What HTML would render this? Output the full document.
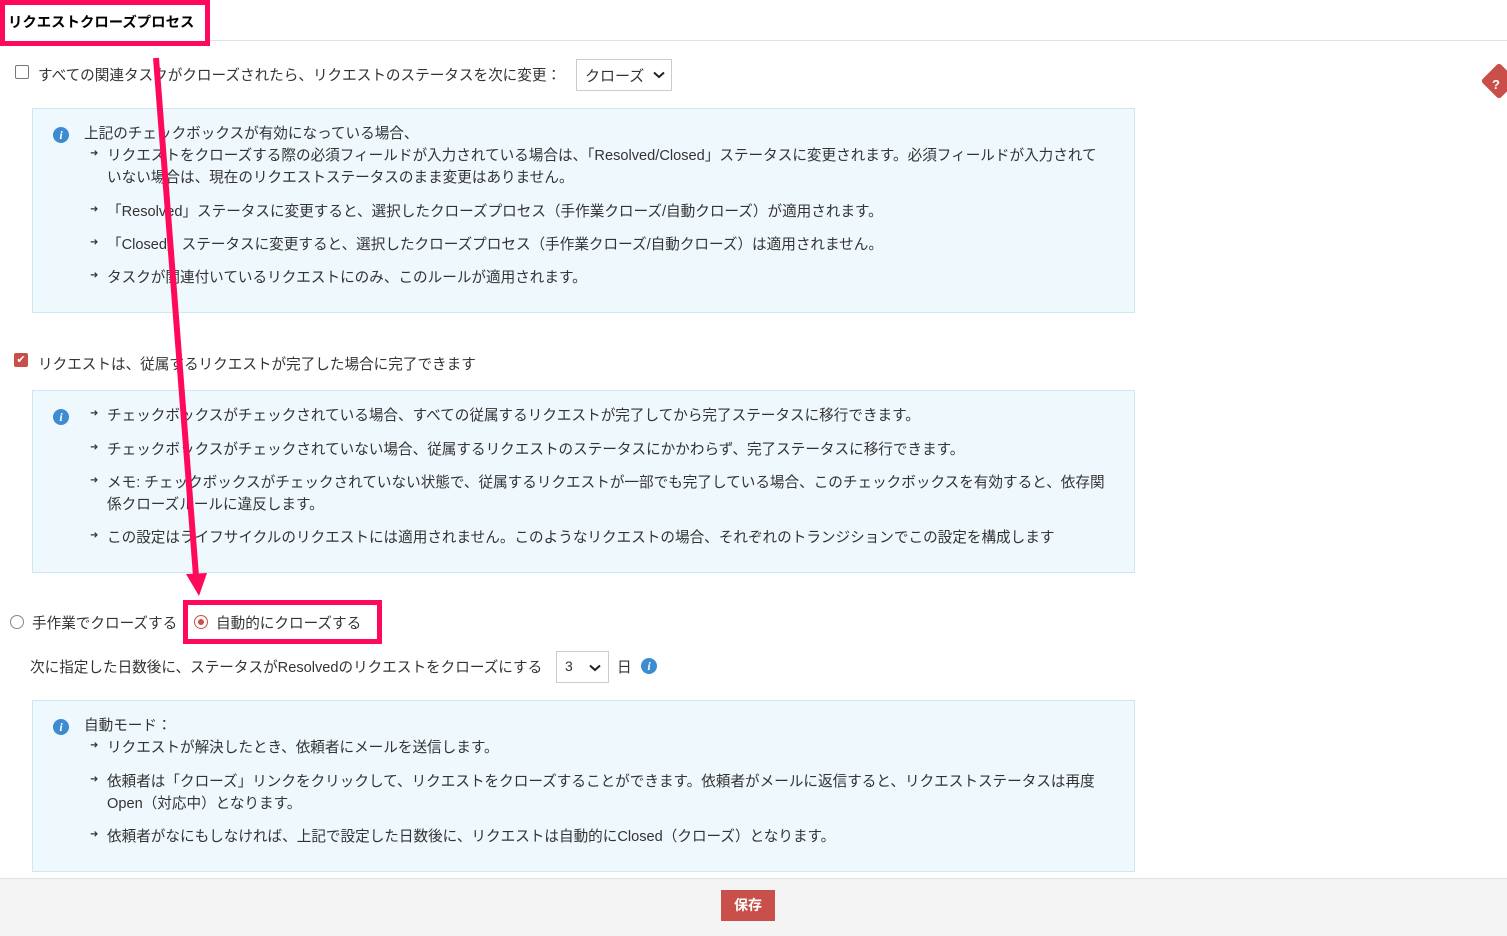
<!DOCTYPE html><html><head><meta charset="utf-8"><style>
body{margin:0;width:1507px;height:935px;position:relative;background:#fff;font-family:"Liberation Sans","Noto Sans CJK JP",sans-serif;font-size:14.6px;color:#333;overflow:hidden}
.a{position:absolute;white-space:nowrap}
.box{position:absolute;left:32px;width:1101px;background:#eff8fd;border:1px solid #cbe8f4}
.i{position:absolute;width:16px;height:16px;border-radius:50%;background:#3d8bd1;color:#fff;font:italic bold 12px "Liberation Serif",serif;text-align:center;line-height:16px}
.ar{position:absolute;font-size:10px;color:#333}
.sel{position:absolute;border:1px solid #ccc;background:#fff;font-size:15px}
.chk{position:absolute;width:12px;height:12px;border:1px solid #777;border-radius:2px;background:#fff}
</style></head><body>
<div class="a" style="left:8px;top:11px;font-weight:bold;font-size:14.4px;color:#000">リクエストクローズプロセス</div>
<div style="position:absolute;left:0;top:0;width:210px;height:46px;border:5px solid #ff0a5a;box-sizing:border-box"></div>
<div style="position:absolute;left:210px;top:40px;width:1297px;height:1px;background:#e2e2e2"></div>
<div style="position:absolute;left:1486px;top:68px;width:26px;height:26px;background:#c9504a;transform:rotate(45deg);border-radius:3px"></div>
<div class="a" style="left:1492px;top:77px;color:#fff;font-weight:bold;font-size:13px">?</div>

<div class="chk" style="left:15px;top:65px"></div>
<div class="a" style="left:38px;top:64px">すべての関連タスクがクローズされたら、リクエストのステータスを次に変更：</div>
<div class="sel" style="left:576px;top:59px;width:94px;height:30px"><span class="a" style="left:8px;top:5px">クローズ</span><svg class="a" style="left:76px;top:11px" width="12" height="8"><path d="M1 1.5L6 6L11 1.5" stroke="#222" stroke-width="2" fill="none"/></svg></div>

<div class="box" style="top:108px;height:203px"></div>
<div class="i" style="left:53px;top:127px">i</div>
<div class="a" style="left:84px;top:122px">上記のチェックボックスが有効になっている場合、</div>
<div class="ar" style="left:90px;top:148px">➜</div><div class="a" style="left:107px;top:144px">リクエストをクローズする際の必須フィールドが入力されている場合は、「Resolved/Closed」ステータスに変更されます。必須フィールドが入力されて</div>
<div class="a" style="left:107px;top:166px">いない場合は、現在のリクエストステータスのまま変更はありません。</div>
<div class="ar" style="left:90px;top:204px">➜</div><div class="a" style="left:107px;top:200px">「Resolved」ステータスに変更すると、選択したクローズプロセス（手作業クローズ/自動クローズ）が適用されます。</div>
<div class="ar" style="left:90px;top:237px">➜</div><div class="a" style="left:107px;top:233px">「Closed」ステータスに変更すると、選択したクローズプロセス（手作業クローズ/自動クローズ）は適用されません。</div>
<div class="ar" style="left:90px;top:270px">➜</div><div class="a" style="left:107px;top:266px">タスクが関連付いているリクエストにのみ、このルールが適用されます。</div>

<div style="position:absolute;left:14px;top:353px;width:14px;height:14px;border-radius:2px;background:#c9504a;color:#fff;font-size:11px;line-height:14px;text-align:center">✔</div>
<div class="a" style="left:38px;top:353px">リクエストは、従属するリクエストが完了した場合に完了できます</div>

<div class="box" style="top:390px;height:181px"></div>
<div class="i" style="left:53px;top:409px">i</div>
<div class="ar" style="left:90px;top:408px">➜</div><div class="a" style="left:107px;top:404px">チェックボックスがチェックされている場合、すべての従属するリクエストが完了してから完了ステータスに移行できます。</div>
<div class="ar" style="left:90px;top:442px">➜</div><div class="a" style="left:107px;top:438px">チェックボックスがチェックされていない場合、従属するリクエストのステータスにかかわらず、完了ステータスに移行できます。</div>
<div class="ar" style="left:90px;top:475px">➜</div><div class="a" style="left:107px;top:471px">メモ: チェックボックスがチェックされていない状態で、従属するリクエストが一部でも完了している場合、このチェックボックスを有効すると、依存関</div>
<div class="a" style="left:107px;top:493px">係クローズルールに違反します。</div>
<div class="ar" style="left:90px;top:530px">➜</div><div class="a" style="left:107px;top:526px">この設定はライフサイクルのリクエストには適用されません。このようなリクエストの場合、それぞれのトランジションでこの設定を構成します</div>

<div style="position:absolute;left:10px;top:615px;width:12px;height:12px;border:1px solid #888;border-radius:50%"></div>
<div class="a" style="left:32px;top:612px">手作業でクローズする</div>
<div style="position:absolute;left:183px;top:600px;width:199px;height:44px;border:5px solid #ff0a5a;box-sizing:border-box"></div>
<div style="position:absolute;left:194px;top:615px;width:12px;height:12px;border:1px solid #c9504a;border-radius:50%"></div>
<div style="position:absolute;left:198px;top:619px;width:6px;height:6px;background:#c9504a;border-radius:50%"></div>
<div class="a" style="left:216px;top:612px">自動的にクローズする</div>

<div class="a" style="left:30px;top:656px">次に指定した日数後に、ステータスがResolvedのリクエストをクローズにする</div>
<div class="sel" style="left:556px;top:651px;width:51px;height:30px"><span class="a" style="left:8px;top:6px;font-size:14px">3</span><svg class="a" style="left:32px;top:12px" width="12" height="8"><path d="M1 1.5L6 6L11 1.5" stroke="#222" stroke-width="2" fill="none"/></svg></div>
<div class="a" style="left:617px;top:656px">日</div>
<div class="i" style="left:641px;top:658px">i</div>

<div class="box" style="top:700px;height:170px"></div>
<div class="i" style="left:53px;top:719px">i</div>
<div class="a" style="left:84px;top:714px">自動モード：</div>
<div class="ar" style="left:90px;top:740px">➜</div><div class="a" style="left:107px;top:736px">リクエストが解決したとき、依頼者にメールを送信します。</div>
<div class="ar" style="left:90px;top:774px">➜</div><div class="a" style="left:107px;top:770px">依頼者は「クローズ」リンクをクリックして、リクエストをクローズすることができます。依頼者がメールに返信すると、リクエストステータスは再度</div>
<div class="a" style="left:107px;top:792px">Open（対応中）となります。</div>
<div class="ar" style="left:90px;top:829px">➜</div><div class="a" style="left:107px;top:825px">依頼者がなにもしなければ、上記で設定した日数後に、リクエストは自動的にClosed（クローズ）となります。</div>

<div style="position:absolute;left:0;top:878px;width:1507px;height:57px;background:#f4f4f4;border-top:1px solid #e2e2e2"></div>
<div class="a" style="left:721px;top:890px;width:54px;height:31px;background:#c9504a;color:#fff;text-align:center;line-height:31px;font-weight:bold;font-size:14px">保存</div>

<svg style="position:absolute;left:0;top:0" width="1507" height="935"><line x1="156" y1="58" x2="196" y2="576" stroke="#ff0a5a" stroke-width="6"/><polygon points="186,574 207,573 199,596" fill="#ff0a5a"/></svg>
</body></html>
